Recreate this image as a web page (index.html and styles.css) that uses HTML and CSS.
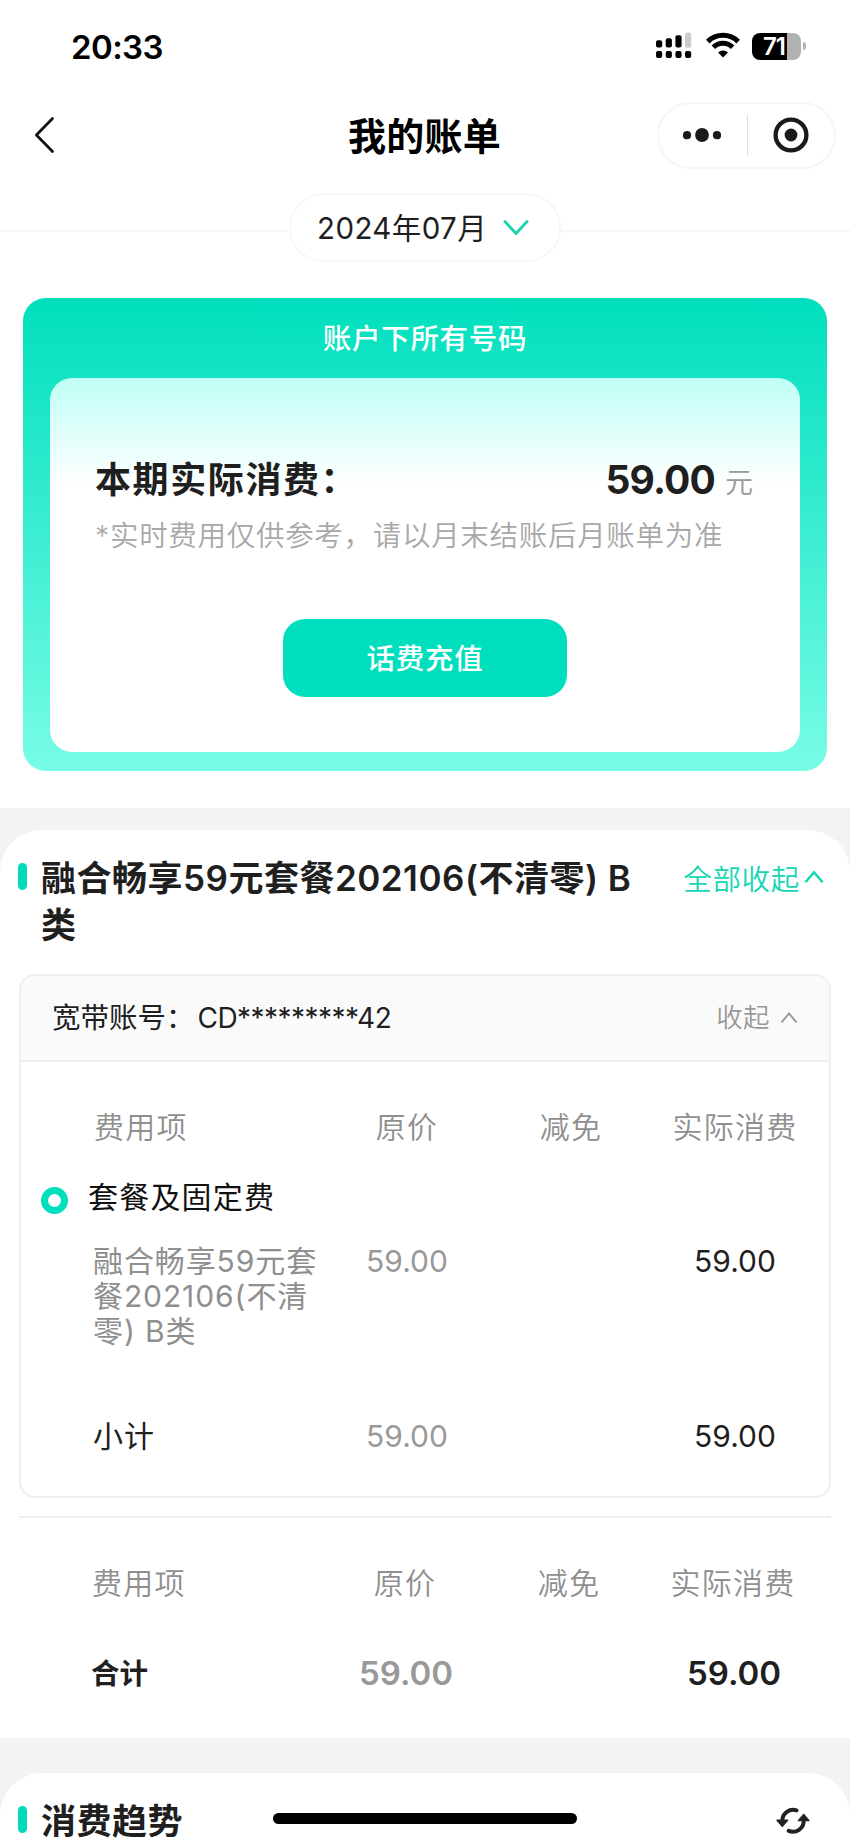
FILE: index.html
```html
<!DOCTYPE html>
<html lang="zh-CN">
<head>
<meta charset="utf-8">
<title>我的账单</title>
<link rel="stylesheet" href="styles.css">
</head>
<body>
<div class="phone">
  <header class="status">
    <span class="clock">20:33</span>
    <div class="status-icons">
      <svg class="signal" width="36" height="28" viewBox="0 0 36 28">
        <rect x="0" y="8.3" width="6.2" height="7.3" rx="2"/>
        <rect x="9.7" y="6.2" width="6.2" height="9.4" rx="2"/>
        <rect x="19.4" y="3.3" width="6.2" height="12.3" rx="2"/>
        <rect x="29" y="0.5" width="6.2" height="15.2" rx="2" fill="#ccc"/>
        <rect x="0" y="19" width="6.2" height="7" rx="2"/>
        <rect x="9.7" y="19" width="6.2" height="7" rx="2"/>
        <rect x="19.4" y="19" width="6.2" height="7" rx="2"/>
        <rect x="29" y="19" width="6.2" height="7" rx="2"/>
      </svg>
      <svg class="wifi" width="34" height="28" viewBox="0 0 34 28">
        <g fill="none" stroke="#000" stroke-width="5">
          <path d="M1.8 9.6a21.6 21.6 0 0 1 30.4 0"/>
          <path d="M7.4 15.3a13.6 13.6 0 0 1 19.2 0"/>
        </g>
        <path d="M17 25.6l-5-5a7.1 7.1 0 0 1 10 0z"/>
      </svg>
      <div class="battery"><span class="battery-level">71</span></div>
      <i class="battery-nub"></i>
    </div>
  </header>

  <nav class="nav">
    <svg class="back" width="22" height="38" viewBox="0 0 22 38"><path d="M18.5 2.6L2.4 19l16.1 16.4" fill="none" stroke="#111" stroke-width="2.8" stroke-linecap="round" stroke-linejoin="round"/></svg>
    <h1 class="nav-title">我的账单</h1>
    <div class="capsule">
      <svg width="38" height="16" viewBox="0 0 38 16" fill="#1a1a1a"><circle cx="4" cy="8.2" r="4.1"/><circle cx="19" cy="8" r="6.9"/><circle cx="34" cy="8.2" r="4.1"/></svg>
      <i class="capsule-line"></i>
      <svg width="36" height="36" viewBox="0 0 36 36"><circle cx="18" cy="18" r="15.4" fill="none" stroke="#1a1a1a" stroke-width="4.3"/><circle cx="18" cy="18" r="6.4" fill="#1a1a1a"/></svg>
    </div>
  </nav>

  <div class="month-row">
    <i class="month-line"></i>
    <button class="month">
      <span>2024年07月</span>
      <svg width="26" height="18" viewBox="0 0 26 18"><path d="M2 2.6l11 12 11-12" fill="none" stroke="#1fd3ae" stroke-width="2.9" stroke-linecap="round" stroke-linejoin="round"/></svg>
    </button>
    <i class="month-line"></i>
  </div>

  <section class="account">
    <h2 class="account-title">账户下所有号码</h2>
    <div class="account-card">
      <div class="spend">
        <span class="spend-label">本期实际消费：</span>
        <span class="spend-value">59.00</span>
        <span class="spend-unit">元</span>
      </div>
      <p class="note">*实时费用仅供参考，请以月末结账后月账单为准</p>
      <button class="recharge">话费充值</button>
    </div>
  </section>

  <main class="content">
    <section class="panel package">
      <div class="panel-head">
        <i class="mark"></i>
        <h2 class="panel-title">融合畅享59元套餐202106(不清零) B类</h2>
        <a class="fold-all"><span>全部收起</span><svg width="20" height="14" viewBox="0 0 20 14"><path d="M1.4 12.2L10 2.4l8.6 9.8" fill="none" stroke="#14d6b2" stroke-width="2.4"/></svg></a>
      </div>

      <div class="bill">
        <div class="bill-head">
          <span class="bill-account">宽带账号：<span class="bill-number">CD*********42</span></span>
          <a class="fold"><span>收起</span><svg width="18" height="13" viewBox="0 0 18 13"><path d="M1.6 11.4L9 2.4l7.4 9" fill="none" stroke="#999" stroke-width="1.9"/></svg></a>
        </div>
        <div class="row row-head">
          <span>费用项</span><span>原价</span><span>减免</span><span>实际消费</span>
        </div>
        <div class="group"><i class="ring"></i><span>套餐及固定费</span></div>
        <div class="row row-item">
          <span class="item-name">融合畅享59元套餐202106(不清零) B类</span><span>59.00</span><span></span><span class="dark">59.00</span>
        </div>
        <div class="row row-sub">
          <span class="dark item-name">小计</span><span>59.00</span><span></span><span class="dark">59.00</span>
        </div>
      </div>

      <div class="total">
        <div class="row total-head">
          <span>费用项</span><span>原价</span><span>减免</span><span>实际消费</span>
        </div>
        <div class="row total-sum">
          <span class="dark total-name">合计</span><span>59.00</span><span></span><span class="dark">59.00</span>
        </div>
      </div>
    </section>

    <section class="panel trend">
      <div class="panel-head">
        <i class="mark"></i>
        <h2 class="panel-title trend-title">消费趋势</h2>
        <svg class="refresh" width="34" height="28" viewBox="0 0 34 28">
          <g fill="none" stroke="#222" stroke-width="4" stroke-linecap="round">
            <path d="M20.500 3.400A10.800 10.800 0 0 0 6.300 13.500"/>
            <path d="M12.700 23.900A10.800 10.800 0 0 0 27.700 13.500"/>
          </g>
          <path d="M1 13.200h10.600L6.300 19.400zM22.400 13.600H33L27.700 7.400z" fill="#222" stroke="#222" stroke-width="1.400" stroke-linejoin="round"/>
        </svg>
      </div>
    </section>
  </main>
  <div class="home-bar"></div>
</div>
</body>
</html>
```
FILE: styles.css
```css
* { box-sizing: border-box; }
body {
  margin: 0;
  background: #fff;
  color: #1f1f1f;
  font-family: Inter, "Noto Sans CJK SC", sans-serif;
}
h1, h2, p { margin: 0; }
button { border: 0; padding: 0; font: inherit; color: inherit; background: none; }
svg, i { display: block; flex: none; }

.phone {
  position: relative;
  width: 850px;
  height: 1840px;
  overflow: hidden;
  background: #fff;
}

/* status bar */
.status {
  display: flex;
  justify-content: space-between;
  height: 92px;
  padding: 0 44px 0 71px;
  align-items: center;
  color: #000;
}
.clock { margin-top: 1px; font-size: 33px; font-weight: 600; letter-spacing: -.6px; line-height: 40px; }
.status-icons { display: flex; align-items: center; }
.wifi { margin-left: 14px; }
.battery {
  margin-left: 12px;
  width: 49px;
  height: 27px;
  border-radius: 8px;
  overflow: hidden;
  background: linear-gradient(90deg, #000 35px, #b2b2b2 35px);
}
.battery-level {
  display: block;
  width: 36px;
  padding-left: 11px;
  color: #fff;
  font-size: 24px;
  font-weight: 600;
  letter-spacing: -1.2px;
  line-height: 27px;
}
.battery-nub { margin-left: 2px; width: 3px; height: 8px; border-radius: 0 3px 3px 0; background: #b2b2b2; }

/* navigation */
.nav {
  display: grid;
  grid-template-columns: 1fr auto 1fr;
  align-items: center;
  height: 86px;
  padding: 0 14px 0 34px;
}
.nav-title {
  margin: 1px 0 0 -21px;
  font-size: 38px;
  font-weight: 600;
  line-height: 50px;
  letter-spacing: .3px;
  color: #000;
}
.capsule {
  justify-self: end;
  display: flex;
  align-items: center;
  width: 179px;
  height: 67px;
  padding: 0 25px 0 24px;
  border: 2px solid #f6f6f6;
  border-radius: 34px;
  justify-content: space-between;
}
.capsule-line { width: 1px; height: 41px; background: #ddd; }

/* month picker */
.month-row { display: flex; align-items: center; height: 69px; margin-top: 15px; }
.month-line { flex: 1; height: 2px; margin-top: 7px; background: #f7f7f7; }
.month {
  display: flex;
  align-items: center;
  width: 272px;
  height: 69px;
  padding: 0 30px 0 26px;
  justify-content: space-between;
  border: 2px solid #f7f7f7;
  border-radius: 35px;
  font-size: 29.5px;
  letter-spacing: .4px;
  line-height: 40px;
}

/* account summary */
.account {
  margin: 36px 23px 0;
  height: 473px;
  padding: 0 27px 18px;
  border-radius: 23px;
  background: linear-gradient(180deg, #00dfbd, #78fce6);
}
.account-title {
  height: 80px;
  font-size: 28.5px;
  font-weight: 500;
  letter-spacing: .7px;
  line-height: 81px;
  text-align: center;
  color: #fff;
}
.account-card {
  height: 374px;
  padding: 72px 47px 0 45px;
  border-radius: 22px;
  background: linear-gradient(180deg, #bffff6, #fff 108px);
}
.spend { display: flex; height: 60px; line-height: 60px; white-space: nowrap; }
.spend-label { flex: 1; font-size: 36px; font-weight: 600; letter-spacing: 1.6px; }
.spend-value { font-size: 39px; font-weight: 700; letter-spacing: -.8px; }
.spend-unit { margin-left: 10px; font-size: 28px; font-weight: 350; line-height: 67px; color: #999; }
.note {
  height: 40px;
  margin-top: 6px;
  font-size: 28.5px;
  font-weight: 350;
  letter-spacing: .7px;
  line-height: 40px;
  color: #a8a8a8;
  white-space: nowrap;
}
.recharge {
  display: block;
  width: 284px;
  height: 78px;
  margin: 63px 0 0 188px;
  border-radius: 22px;
  background: #00dfbd;
  color: #fff;
  font-size: 28.5px;
  font-weight: 500;
  letter-spacing: .7px;
  line-height: 79px;
  text-align: center;
}

/* panels */
.content { margin-top: 37px; padding-top: 22px; background: #f3f3f3; }
.panel { background: #fff; padding: 0 19px; }
.package { height: 908px; border-radius: 42px 42px 0 0; }
.trend { height: 67px; margin-top: 35px; border-radius: 42px 42px 0 0; }
.panel-head { display: flex; padding-top: 24px; }
.mark { width: 9px; height: 27px; margin: 9px 0 0 -1px; border-radius: 5px; background: #00dcb9; }
.panel-title {
  width: 600px;
  margin: 1px 0 -1px 14px;
  font-size: 35px;
  font-weight: 600;
  letter-spacing: .5px;
  line-height: 47px;
}
.trend-title { margin: 6px 0 0 14px; line-height: 37px; }
.fold-all {
  display: flex;
  align-items: center;
  margin-left: auto;
  height: 46px;
  padding-right: 7px;
  gap: 4px;
  white-space: nowrap;
  font-size: 28.5px;
  font-weight: 350;
  letter-spacing: .7px;
  color: #14d6b2;
}

.bill {
  height: 524px;
  margin-top: 26px;
  border: 2px solid #eee;
  border-radius: 16px;
  overflow: hidden;
}
.bill-head {
  display: flex;
  align-items: center;
  justify-content: space-between;
  height: 86px;
  padding: 0 31px;
  border-bottom: 2px solid #eee;
  background: #fafafa;
  font-size: 28.5px;
  line-height: 40px;
}
.bill-number { margin-left: 3px; font-size: 28px; letter-spacing: -.55px; }
.fold { display: flex; align-items: center; gap: 10px; margin-top: -2px; font-size: 26.5px; font-weight: 350; letter-spacing: .4px; color: #999; }

.row {
  display: grid;
  grid-template-columns: 231px 164px 164px 164px;
  margin-left: 73px;
  font-size: 30px;
  line-height: 35px;
  color: #999;
}
.row > span:not(:first-child) { text-align: center; }
.row .dark { color: #1f1f1f; }
.item-name { margin-left: -1px; letter-spacing: .9px; }
.row-item .item-name { color: #8f8f8f; }
.row-head, .total-head { font-size: 30px; font-weight: 350; letter-spacing: 1.2px; color: #8f8f8f; }
.row-head { margin-top: 48px; }
.group {
  display: flex;
  gap: 20px;
  height: 36px;
  margin: 34px 0 0 20px;
  font-size: 30px;
  letter-spacing: 1.2px;
  line-height: 36px;
  color: #111;
}
.ring { width: 27px; height: 27px; margin-top: 8px; border: 7.5px solid #00dfbd; border-radius: 50%; background: #fff; }
.row-item { margin-top: 29px; }
.row-sub { margin-top: 70px; }

.total { margin-top: 18px; border-top: 2px solid #eee; padding-top: 48px; }
.total .row { margin-left: 73px; }
.total-sum { margin-top: 55px; font-size: 33px; font-weight: 600; }
.total .total-sum { margin-left: 74px; }
.total-name { font-size: 28.5px; margin-left: -2px; }

.refresh { margin: 10px 21px 0 auto; }
.home-bar {
  position: absolute;
  left: 273px;
  top: 1813px;
  width: 304px;
  height: 11px;
  border-radius: 6px;
  background: #000;
}
```
